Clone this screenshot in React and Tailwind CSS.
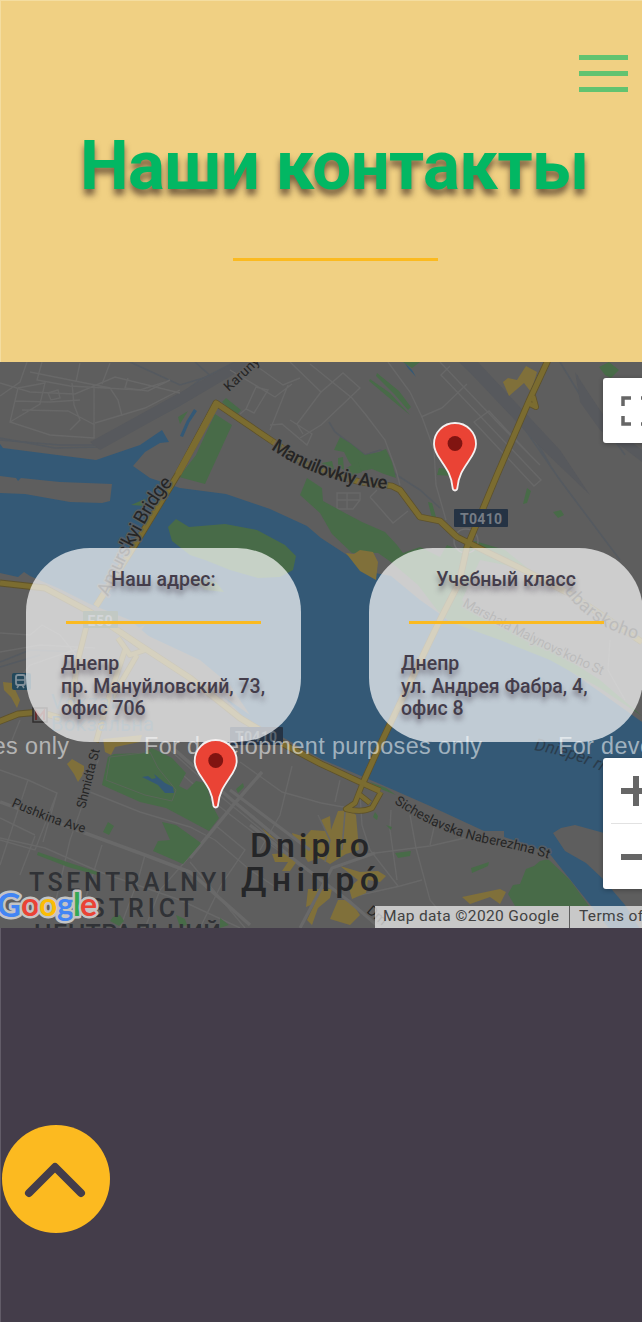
import React from "react";

const FONT = "font-['Roboto','Liberation_Sans',sans-serif]";

const GREENS = [
  "M215 414 232 425 205 484 179 477 196 455 200 446Z",
  "M226 398 241 410 236 416 222 402Z",
  "M168 527 176 519 189 527 225 524 257 530 285 545 296 556 293 570 280 577 258 578 230 570 205 560 190 555 172 541Z",
  "M131 505 145 499 146 506Z",
  "M178 417 188 411 180 424Z",
  "M300 495 307 478 322 488 323 501 345 513 362 522 385 532 397 545 403 553 420 547 440 557 447 545 458 550 475 541 505 550 530 570 480 560 462 600 480 617 540 642 600 680 642 716 600 688 550 660 500 640 450 622 437 610 418 585 391 562 378 553 352 553 332 534 320 513Z",
  "M334 450 340 437 350 443 365 455 379 452 386 449 392 462 396 478 384 474 372 469 358 472 349 462 344 452Z",
  "M322 463 332 461 334 469 327 471Z M338 458 343 457 344 470 338 466Z M346 468 358 462 362 472 348 477Z",
  "M377 373 399 391 411 407 408 410 395 395 376 376Z M370 379 390 393 410 415 388 397 369 381Z",
  "M439 468 449 469 452 476 437 475Z M428 502 432 503 436 517 432 518Z",
  "M403 362 420 362 412 368Z M599 367 609 362 619 370 611 378 605 375Z",
  "M523 504 527 488 531 491 527 503Z M553 512 561 510 564 515 558 518Z",
  "M108 757 114 754 143 753 152 748 172 758 186 773 179 786 187 790 196 781 206 783 212 805 219 818 209 831 166 808 140 802 102 785Z",
  "M162 822 176 825 201 843 183 864 153 851 158 841 170 840Z",
  "M108 822 114 826 109 835 103 832Z M236 789 243 783 244 787 238 793Z",
  "M38 852 70 863 98 872 97 875 68 867 37 855Z",
  "M515 906 508 894 513 885 520 884 526 869 534 866 540 861 548 859 570 880 589 906Z",
  "M471 868 489 862 488 866 472 873Z M395 853 411 851 410 856 398 858Z",
  "M190 578 216 582 224 592 205 590Z M370 782 386 788 396 795 378 788Z M375 812 378 816 377 820 373 817Z M386 825 392 827 391 830Z",
  "M113 917 120 915 124 921 119 926 110 921Z M176 915 185 919 187 925 180 927Z M220 918 229 925 220 928Z",
];

const MINOR = [
  "M27 362 20 382 0 396M0 383 30 392 75 394 115 377 180 393M42 362 37 380 70 386 140 390 165 382M30 372 110 388 118 400 122 416",
  "M18 388 10 422 50 435 94 438 94 388M15 401 50 402 80 400M22 410 68 411 95 425M10 422 40 404 45 383 18 388M48 393 58 390 60 398 51 400ZM72 383 74 405 80 420 70 430",
  "M80 363 76 382M110 363 102 384M128 378 125 388 148 391 170 380M180 390 145 408 95 423",
  "M230 370 275 397 292 384M255 365 283 385 300 378M256 387 246 409 254 413 268 390ZM240 414 246 409M270 425 282 424 307 445 312 434 290 420M270 430 288 385",
  "M290 362 321 392 343 373 360 388 321 425 300 438M321 392 297 424 303 434M310 364 352 398 366 415 385 440 396 470 400 485",
  "M388 362 410 392 422 417 434 450 436 485 446 520M421 417 442 408 467 384",
  "M450 366 441 375 541 480 534 486 474 422 489 411 530 455M440 362 500 425 540 465",
  "M337 493 360 493 360 500 353 509 337 509ZM337 500 360 500M347 493 347 509M370 497 393 523 408 511M370 497 377 490",
  "M0 770 28 780 57 793 35 850 0 840M57 793 43 842M99 758 70 840M0 838 45 848 100 872 180 900 240 928M28 780 0 865M35 836 20 875M70 840 56 900M90 792 140 812 190 827 215 840 250 870 280 890",
  "M152 748 215 803 250 830 300 866M170 750 225 800 280 845M262 772 235 803 183 864 160 890 145 928M215 825 245 850 221 885 200 928M240 762 282 792 321 803M292 766 280 815 260 850",
  "M145 855 138 880 120 928M102 845 85 900M190 862 245 928M321 803 360 810M340 780 335 802M360 793 362 825 370 850 398 886",
  "M391 810 390 830 397 880M410 815 416 848 430 900 440 912M435 823 430 845M360 855 430 846 465 838M360 895 400 886 422 880",
  "M0 633 30 635 42 625 60 635 80 660M0 652 40 645 95 648M10 690 30 665 80 648M20 720 12 740M610 640 608 670 625 700M0 818 35 835",
];

const COMMERCIAL = [
  "M503 382 508 378 517 380 526 366 537 372 531 392 524 383 509 396Z",
  "M346 553 354 554 360 550 373 552 378 562 376 580 360 571Z",
  "M67 764 72 759 84 766 84 773 78 782 74 774Z M103 739 142 735 140 742 115 747 111 755 105 752Z M3 682 12 683 20 700 17 708 11 697 4 690Z",
  "M338 811 350 810 356 815 359 850 346 854 330 864 320 858 308 862 302 852 306 842 294 840 292 833 305 837 311 830 325 831 321 820 330 816 331 830Z",
  "M272 854 290 853 297 861 290 871 282 871 288 862 275 862Z M262 828 276 840 268 836Z",
  "M340 866 360 872 378 871 386 876 380 882 368 880 366 893 352 899 349 888 358 880Z",
  "M308 889 332 889 330 898 318 908 312 925 307 920 315 903 306 907Z M338 900 350 900 360 915 350 925 330 919Z",
  "M462 897 500 889 506 892 500 904 490 897 470 904Z",
];

const RAIL = [
  "M0 440 60 445 95 445 160 410 200 380 235 362",
  "M0 438 55 448 100 447 180 405 250 362",
  "M130 362 180 385 210 376M195 362 215 380",
  "M460 362 515 415 560 480 620 560M465 362 530 430 550 465",
  "M560 362 580 395 615 435 642 455M577 375 582 400 642 460M590 405 625 455",
  "M329 422 335 432 365 455 380 450 385 452 392 472 420 490 440 508",
  "M0 662 30 650 80 652M0 667 40 655",
];

const ROADS = [
  "M272 441 216 403 178 474 133 548 96 606",
  "M272 441 310 467 360 482 392 486 400 490 420 517 440 521 457 537 485 551 520 568 570 594 642 642",
  "M549 358 529 401 497 475 467 547 459 583 440 620 380 745 362 785",
  "M0 583 45 588 90 612 135 642 190 678 240 718 285 745 321 764 362 783 380 791",
  "M-2 722 18 714 40 712 60 718",
];

const THIN_ROADS = [
  "M90 612 78 660 70 710M120 632 145 650 130 655 118 638M125 650 108 700 96 742M137 655 112 698",
  "M362 785 355 803 346 809Q362 813 372 808L381 792M360 795 370 803M533 396 536 407 528 403",
];

function MapLabel({ d, id, children, length, size, className = "fill-[#252525]", weight = 400, italic }) {
  return (
    <>
      <path id={id} d={d} fill="none" stroke="none" />
      <text
        className={className}
        fontSize={size}
        fontWeight={weight}
        fontStyle={italic ? "italic" : "normal"}
        textLength={length}
      >
        <textPath href={"#" + id} textLength={length}>
          {children}
        </textPath>
      </text>
    </>
  );
}

function Pin({ x, y }) {
  return (
    <g transform={`translate(${x} ${y})`}>
      <path
        d="M0 -.5C-2 -.5 -2.4 -2 -2.5 -4C-3.5 -16 -9 -23 -14 -30.5C-18 -36 -21 -41 -21 -47A21 21 0 0 1 21 -47C21 -41 18 -36 14 -30.5C9 -23 3.5 -16 2.5 -4C2.4 -2 2 -.5 0 -.5Z"
        fill="#ea4335"
        stroke="#f4f0f0"
        strokeWidth="1.8"
      />
      <circle cy="-47.5" r="7.4" fill="#811411" />
    </g>
  );
}

function CityMap() {
  return (
    <svg viewBox="0 362 642 566" className={"block h-[566px] w-[642px] " + FONT}>
      <rect y="362" width="642" height="566" fill="#5e5e5e" />
      <g fill="none" stroke="#555a60" strokeWidth="1.6">
        {RAIL.map((d) => <path key={d} d={d} />)}
      </g>
      <path d="M460 362 478 362 560 450 590 495 545 452Z M575 372 590 395 610 425 642 450 642 462 600 430 580 402Z M90 442 170 398 235 362 255 362 190 400 100 450Z" fill="#57595d" />
      <g fill="none" stroke="#686868" strokeWidth="1.4">
        {MINOR.map((d) => <path key={d} d={d} />)}
      </g>
      <path d="M0 802 145 855 190 872 250 925M175 750 232 800 290 848M262 772 235 803 190 858" fill="none" stroke="#696969" strokeWidth="3.5" />

      <path
        fill="#345976"
        d="M0 444 3 448 96 460 140 445 162 430 169 442 160 443 145 452 133 466 150 478 180 488 226 494 270 509 307 526 321 538 347 555 375 573 391 576 420 600 437 612 450 622 500 636 560 664 600 692 642 722V852L615 836 575 825 561 828 553 833 565 851 586 863 602 878 625 905 642 932H612L549 853 516 841 504 837 504 831 484 831 430 806 380 784 321 759 284 738 250 724 230 703 200 675 165 650 130 620 90 604 60 589 30 576 24 572 18 577 0 573Z"
      />
      <path fill="#5e5e5e" d="M0 476 16 478 18 481 21 478 60 482 112 484 110 501 102 503 70 502 25 494 0 493Z" />
      <path fill="#5e5e5e" d="M138 628 145 625 140 632 200 660 230 685 250 715 200 680Z" />
      <path fill="#345976" d="M194 409 197 411 189 423 186 422ZM187 420 190 421 183 437 180 436ZM404 362 412 370 416 377 408 368Z" />
      <g fill="#486b48">
        {GREENS.map((d) => <path key={d} d={d} />)}
      </g>
      <path d="M142 777 148 776 152 779 156 778 154 774 165 783 173 787 174 793 165 793 158 785Z" fill="#345976" />
      <path d="M110 757 150 752 158 768 176 790 172 801 145 795 106 780Z" fill="none" stroke="#5a6659" />
      <g fill="#80703a">
        {COMMERCIAL.map((d) => <path key={d} d={d} />)}
      </g>
      <path d="M318 815 330 840 325 862M345 812 342 850" stroke="#666" strokeWidth="1.6" fill="none" />
      <path d="M250 825 300 864 350 902 380 928M230 790 310 850M300 928 332 868 375 853" stroke="#696969" strokeWidth="3.2" fill="none" />

      <circle cx="466" cy="541" r="12" fill="none" stroke="#6c6c6c" strokeWidth="1.5" />
      <g fill="none" stroke="#5e522b" strokeWidth="6.8" strokeLinejoin="round">
        {ROADS.map((d) => <path key={d} d={d} />)}
      </g>
      <g fill="none" stroke="#5e522b" strokeWidth="6" strokeLinejoin="round">
        {THIN_ROADS.map((d) => <path key={d} d={d} />)}
      </g>
      <g fill="none" stroke="#7b6c30" strokeWidth="5.2" strokeLinejoin="round">
        {ROADS.map((d) => <path key={d} d={d} />)}
      </g>
      <g fill="none" stroke="#7b6c30" strokeWidth="4.4" strokeLinejoin="round">
        {THIN_ROADS.map((d) => <path key={d} d={d} />)}
      </g>
      <path d="M216 405 178 474" stroke="#7b6c30" strokeWidth="6.5" />

      <g stroke="#5e5e5e" strokeOpacity="0.75" strokeWidth="3" strokeLinejoin="round" style={{ paintOrder: "stroke" }}>
        <MapLabel id="l1" d="M229 392 L262 361 L290 334" size="13.5" length={60}>Karuny St</MapLabel>
        <MapLabel id="l2" d="M271 449 C300 470 345 487 391 489" size="18.5" length={124} weight={500}>Manuilovkiy Ave</MapLabel>
        <MapLabel id="l3" d="M108 597 Q128 554 146 522 T174 483" size="19" length={131}>Amurs'kyi Bridge</MapLabel>
        <MapLabel id="l4" d="M564 591 Q590 627 637 639" size="18" length={89}>ubarskoho</MapLabel>
        <MapLabel id="l5" d="M462 606 Q530 643 603 676" size="13.5" length={156}>Marshala Malynovs'koho St</MapLabel>
        <MapLabel id="l7" d="M394 803 Q440 834 485 843 T549 859" size="13.5" length={165}>Sicheslavska Naberezhna St</MapLabel>
        <MapLabel id="l8" d="M11 806 Q45 822 84 833" size="13" length={78}>Pushkina Ave</MapLabel>
        <MapLabel id="l9" d="M85 809 L100 749" size="13" length={61}>Shmidta St</MapLabel>
        <text x="366" y="912" fontSize="14" fill="#252525" transform="rotate(40 366 912)">Dm</text>
      </g>
      <MapLabel id="l6" d="M534 750 Q577 757 616 779" size="17" length={79} italic className="fill-[#2b3c4c]">Dnieper riv</MapLabel>

      <rect x="454" y="509" width="54" height="18" rx="1" fill="#253344" />
      <rect x="230" y="727" width="53" height="18" rx="1" fill="#253344" />
      <rect x="83" y="611" width="35" height="17" rx="1" fill="#3b5340" />
      <g fill="#757c85" fontSize="14" fontWeight="700" textAnchor="middle">
        <text x="481" y="524" textLength="42">T0410</text>
        <text x="256" y="742" textLength="42" fill="#596470">T0410</text>
        <text x="100" y="626" textLength="25">E50</text>
      </g>
      <g>
        <rect x="12" y="673" width="19" height="17" rx="2" fill="#23485b" />
        <rect x="16" y="675" width="9" height="10" rx="2" fill="none" stroke="#81909a" strokeWidth="1.8" />
        <path d="M16 680H25M17 688 19 685M24 688 22 685" stroke="#81909a" strokeWidth="1.5" />
        <rect x="33" y="708" width="14" height="14" fill="#5e5e5e" stroke="#302e2e" strokeWidth="1.5" />
        <path d="M36 720V711L40 716 44 711V720" fill="none" stroke="#672d2d" strokeWidth="2" />
      </g>
      <g fill="#3d5a6b" fontSize="20">
        <text x="51" y="709" textLength="88">Vokzalna</text>
        <text x="51" y="731" textLength="103">Вокзальна</text>
      </g>
      <g fill="#252628" fontWeight="500">
        <text x="250" y="857" fontSize="34" textLength="119">Dnipro</text>
        <text x="241" y="891" fontSize="34" textLength="138">Дніпрó</text>
        <g fill="#303236">
          <text x="29" y="891" fontSize="25" textLength="198">TSENTRALNYI</text>
          <text x="58" y="917" fontSize="25" textLength="136">DISTRICT</text>
          <text x="34" y="943" fontSize="25" textLength="187">ЦЕНТРАЛЬНИЙ</text>
        </g>
      </g>
      <g fill="#fff" fillOpacity="0.55" fontSize="23.3" className="font-['Liberation_Sans',sans-serif]">
        <text x="-269" y="754" textLength="338">For development purposes only</text>
        <text x="144" y="754" textLength="338">For development purposes only</text>
        <text x="558" y="754" textLength="338">For development purposes only</text>
      </g>
    </svg>
  );
}

function AddressCard({ title, lines, className, linesClassName }) {
  return (
    <section className={"h-[194px] shrink-0 rounded-[64px] bg-white/69 text-[#443d4b] [text-shadow:0_5px_5px_rgba(60,50,65,0.5)] " + className}>
      <h2 className="mt-[20px] text-center text-[19.5px] font-medium leading-[24px]">{title}</h2>
      <div className="mx-auto mt-[29px] h-[3px] w-[195px] bg-[#fbba20]" />
      <p className={"mt-[29px] text-[19.5px] font-medium leading-[22.7px] " + linesClassName}>
        {lines.map((line) => (
          <span key={line} className="block whitespace-nowrap">{line}</span>
        ))}
      </p>
    </section>
  );
}

function GoogleLogo() {
  return (
    <svg
      viewBox="0 0 104 44"
      className="absolute bottom-0 left-0 h-[44px] w-[104px] font-['Lato',sans-serif]"
      fontSize="32"
      fontWeight="700"
      stroke="#c4c4c4"
      strokeWidth="5"
      strokeLinejoin="round"
      style={{ paintOrder: "stroke" }}
    >
      <text x="-3" y="33" fill="#4285f4" textLength="24" lengthAdjust="spacingAndGlyphs">G</text>
      <text x="21" y="32" fill="#ea4335">o</text>
      <text x="39" y="32" fill="#fbbc05">o</text>
      <text x="57" y="32" fill="#4285f4">g</text>
      <text x="73" y="32" fill="#34a853">l</text>
      <text x="80" y="32" fill="#ea4335">e</text>
    </svg>
  );
}

export default function App() {
  return (
    <main className={"h-[1322px] w-[642px] overflow-hidden bg-[#443d4a] " + FONT}>
      <header className="flex h-[362px] flex-col border-l border-t border-[#f4dda0] bg-[#f0d083]">
        <button aria-label="Меню" className="mr-[14px] mt-[54px] flex w-[49px] flex-col gap-[11px] self-end">
          <span className="h-[5px] w-full bg-[#62c370]" />
          <span className="h-[5px] w-full bg-[#62c370]" />
          <span className="h-[5px] w-full bg-[#62c370]" />
        </button>
        <h1 className="ml-[79px] mt-[33px] h-[82px] whitespace-nowrap text-[69px] font-bold leading-[82px] tracking-[-0.65px] text-[#02b763] [text-shadow:0_6px_6px_rgba(40,20,20,0.6)]">
          Наши контакты
        </h1>
        <div className="ml-[232px] mt-[51px] h-[3px] w-[205px] bg-[#fbba20]" />
      </header>

      <section className="relative h-[566px] overflow-hidden">
        <CityMap />
        <div className="absolute left-[26px] top-[186px] flex gap-[68px]">
          <AddressCard
            title="Наш адрес:"
            lines={["Днепр", "пр. Мануйловский, 73,", "офис 706"]}
            className="w-[275px]"
            linesClassName="pl-[35px]"
          />
          <AddressCard
            title="Учебный класс"
            lines={["Днепр", "ул. Андрея Фабра, 4,", "офис 8"]}
            className="w-[274px]"
            linesClassName="pl-[32px]"
          />
        </div>
        <svg viewBox="0 362 642 566" className="pointer-events-none absolute inset-0 h-[566px] w-[642px]">
          <Pin x={455} y={491} />
          <Pin x={215.7} y={808} />
        </svg>

        <button aria-label="На весь экран" className="absolute left-[603px] top-[16px] flex h-[65px] w-[65px] items-center justify-center rounded-[3px] bg-white shadow-[0_1px_5px_rgba(0,0,0,0.3)]">
          <svg viewBox="0 0 30 30" className="h-[30px] w-[30px] fill-none stroke-[#666] stroke-[3.5]">
            <path d="M2 10V2H10M20 2H28V10M28 20V28H20M10 28H2V20" />
          </svg>
        </button>
        <div className="absolute left-[603px] top-[396px] flex h-[131px] w-[65px] flex-col items-center rounded-[3px] bg-white shadow-[0_1px_5px_rgba(0,0,0,0.3)]">
          <button aria-label="Увеличить" className="flex h-[65px] items-center">
            <svg viewBox="0 0 30 30" className="h-[30px] w-[30px] fill-none stroke-[#666] stroke-[6]">
              <path d="M0 15H30M15 0V30" />
            </svg>
          </button>
          <div className="h-px w-[49px] bg-[#e2e2e2]" />
          <button aria-label="Уменьшить" className="flex h-[65px] items-center">
            <svg viewBox="0 0 30 30" className="h-[30px] w-[30px] fill-none stroke-[#666] stroke-[6]">
              <path d="M0 15H30" />
            </svg>
          </button>
        </div>
        <GoogleLogo />
        <div className="absolute bottom-0 left-[375px] flex h-[22px] gap-px whitespace-nowrap text-[15.5px] leading-[21px] text-[#414141]">
          <span className="w-[194px] bg-[#f5f5f5]/70 pl-[8px] tracking-[0.36px]">Map data ©2020 Google</span>
          <span className="w-[110px] bg-[#f5f5f5]/70 pl-[9px] tracking-[0.36px]">Terms of Use</span>
        </div>
      </section>

      <footer className="h-[394px] border-l border-[#625c68] pl-px pt-[197px]">
        <button aria-label="Наверх" className="flex h-[108px] w-[108px] items-center justify-center rounded-full bg-[#fcba20]">
          <svg viewBox="0 0 108 108" className="h-[108px] w-[108px] fill-none stroke-[#443d4a] stroke-[8]" strokeLinecap="round" strokeLinejoin="round">
            <path d="M27 68 53 42 79 68" />
          </svg>
        </button>
      </footer>
    </main>
  );
}
